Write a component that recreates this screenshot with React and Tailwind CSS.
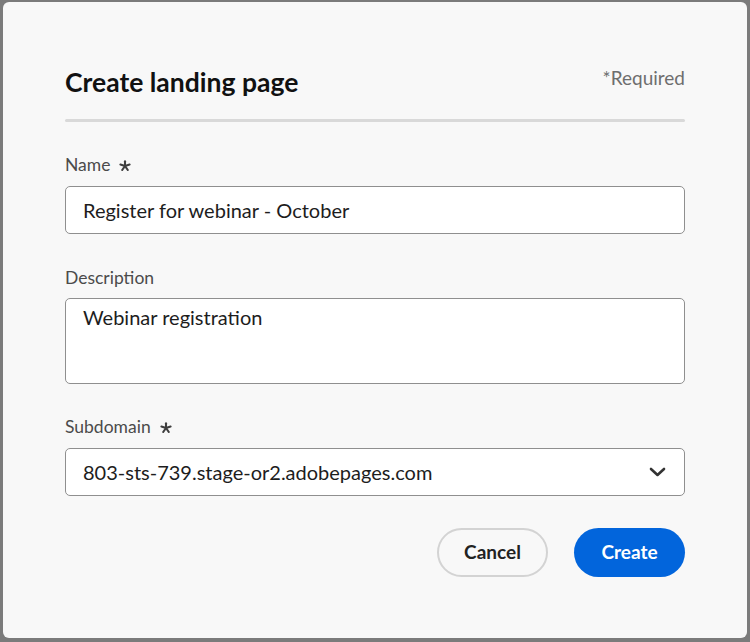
import React from "react";

const font = { fontFamily: "Lato, 'Open Sans', sans-serif" };

function Label({ children, required }) {
  return (
    <div className="flex items-center gap-[9px] text-[17.5px] leading-[20px] text-[#4b4b4b] h-[20px]">
      <span>{children}</span>
      {required && (
        <svg width="12" height="12" viewBox="0 0 12 12" className="mt-[1px]">
          <g stroke="#3f3f3f" strokeWidth="2.1" strokeLinecap="round">
            <path d="M6 1.2 V6" />
            <path d="M6 6 L1.4 4.5" />
            <path d="M6 6 L10.6 4.5" />
            <path d="M6 6 L3.2 10" />
            <path d="M6 6 L8.8 10" />
          </g>
        </svg>
      )}
    </div>
  );
}

export default function App() {
  return (
    <div
      className="w-[750px] h-[642px] bg-[#7b7b7b] pt-[2px] pl-[3px] pr-[3px] pb-[4px]"
      style={font}
    >
      <div className="h-full w-full rounded-[6px] bg-[#f8f8f8] pt-[64px] px-[62px]">
        <div className="flex justify-between items-start">
          <h1 className="text-[26.5px] leading-[32px] font-bold text-[#111]">
            Create landing page
          </h1>
          <span className="text-[19px] leading-[24px] text-[#6e6e6e]">*Required</span>
        </div>
        <div className="mt-[21px] h-[3px] bg-[#d9d9d9] rounded-full" />

        <div className="mt-[33px]">
          <Label required>Name</Label>
          <div className="mt-[11px] h-[48px] rounded-[5px] border border-[#8f8f8f] bg-white flex items-center pl-[17px] text-[20px] text-[#1d1d1d]">
            Register for webinar - October
          </div>
        </div>

        <div className="mt-[34px]">
          <Label>Description</Label>
          <div className="mt-[10px] h-[86px] rounded-[5px] border border-[#8f8f8f] bg-white pl-[17px] pt-[6px] text-[20px] leading-[24px] text-[#1d1d1d]">
            Webinar registration
          </div>
        </div>

        <div className="mt-[33px]">
          <Label required>Subdomain</Label>
          <div className="mt-[11px] h-[48px] rounded-[5px] border border-[#8f8f8f] bg-white flex items-center justify-between pl-[17px] pr-[18px] text-[20px] text-[#1d1d1d]">
            <span>803-sts-739.stage-or2.adobepages.com</span>
            <svg width="17" height="10" viewBox="0 0 17 10">
              <path
                d="M2 2 L8.5 8 L15 2"
                fill="none"
                stroke="#333"
                strokeWidth="2.6"
                strokeLinecap="round"
                strokeLinejoin="round"
              />
            </svg>
          </div>
        </div>

        <div className="mt-[32px] flex justify-end gap-[26px]">
          <button className="w-[111px] h-[49px] rounded-full border-[2.5px] border-[#d3d3d3] bg-[#f8f8f8] text-[19px] font-bold text-[#222]">
            Cancel
          </button>
          <button className="w-[111px] h-[49px] rounded-full bg-[#0265dc] text-[19px] font-bold text-white">
            Create
          </button>
        </div>
      </div>
    </div>
  );
}
